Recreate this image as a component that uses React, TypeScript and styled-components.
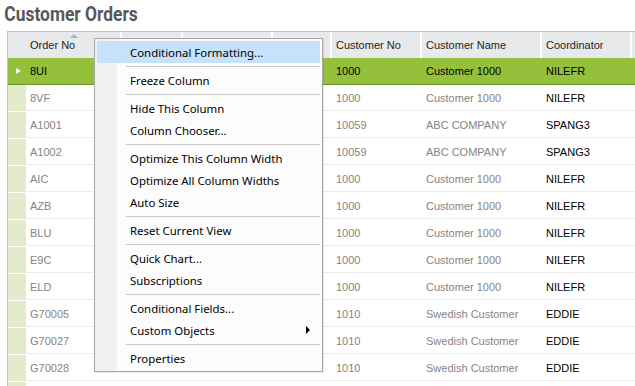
import React from "react";
import styled, { createGlobalStyle } from "styled-components";

const GlobalStyle = createGlobalStyle`
  html, body {
    margin: 0;
    padding: 0;
    background: #ffffff;
    overflow: hidden;
  }
`;

const Page = styled.div`
  position: relative;
  width: 635px;
  height: 386px;
  overflow: hidden;
  font-family: "Liberation Sans", Arial, sans-serif;
`;

const Title = styled.h1`
  margin: 0;
  padding: 3px 0 0 5px;
  height: 28px;
  box-sizing: border-box;
  font-family: Roboto, "Liberation Sans", sans-serif;
  font-weight: 700;
  font-size: 20px;
  line-height: 22px;
  color: #585858;
  transform: scaleX(0.87);
  transform-origin: left center;
  white-space: nowrap;
`;

const Grid = styled.div`
  margin: 3px 0 0 7px;
  border-left: 1px solid #c4c4c4;
  border-top: 1px solid #c4c4c4;
  width: 700px;
`;

const COLS = "18px 96px 61px 90px 59px 90px 120px 90px 80px";

const HeaderRow = styled.div`
  display: grid;
  grid-template-columns: 114px 61px 90px 59px 90px 120px 90px 80px;
  height: 26px;
  background: #e8e9eb;
`;

const HeadCell = styled.div<{ $pad?: number }>`
  position: relative;
  display: flex;
  align-items: center;
  padding-left: ${(p) => p.$pad ?? 4}px;
  padding-right: 2px;
  border-right: 2px solid #ffffff;
  font-size: 11px;
  color: #1e1e1e;
  white-space: nowrap;
  overflow: hidden;
  min-width: 0;
  & > span {
    overflow: hidden;
    text-overflow: ellipsis;
  }
`;

const SortMark = styled.div`
  position: absolute;
  top: 2px;
  left: 62px;
  width: 0;
  height: 0;
  border-left: 4px solid transparent;
  border-right: 4px solid transparent;
  border-bottom: 4px solid #a9b4bf;
`;

const Row = styled.div<{ $selected?: boolean }>`
  display: grid;
  grid-template-columns: ${COLS};
  height: 27px;
  box-sizing: border-box;
  font-size: 11px;
  background: ${(p) => (p.$selected ? "#94c03c" : "#ffffff")};
  border-bottom: 1px solid ${(p) => (p.$selected ? "#6d9428" : "transparent")};
`;

const Indicator = styled.div<{ $selected?: boolean }>`
  display: flex;
  align-items: center;
  justify-content: center;
  background: ${(p) => (p.$selected ? "#94c03c" : "#e2ebcc")};
`;

const Arrow = styled.div`
  width: 0;
  height: 0;
  border-top: 3.5px solid transparent;
  border-bottom: 3.5px solid transparent;
  border-left: 5px solid #ffffff;
  margin-left: 2px;
`;

const Cell = styled.div<{ $selected?: boolean; $dark?: boolean }>`
  display: flex;
  align-items: center;
  padding-left: 4px;
  white-space: nowrap;
  overflow: hidden;
  color: ${(p) => (p.$selected || p.$dark ? "#000000" : "#848484")};
  border-bottom: 1px solid ${(p) => (p.$selected ? "transparent" : "#ececec")};
`;

const Menu = styled.div`
  position: absolute;
  left: 94px;
  top: 38px;
  width: 229px;
  box-sizing: border-box;
  padding: 2px;
  border: 1px solid #a8a8a8;
  background: linear-gradient(to right, #f1f1f1 0, #f1f1f1 22px, #fcfcfc 22px);
  box-shadow: 1px 1px 1px rgba(0, 0, 0, 0.08);
  font-family: "Noto Sans", "Open Sans", sans-serif;
  font-size: 11.4px;
  color: #000000;
`;

const MenuItem = styled.div<{ $active?: boolean }>`
  position: relative;
  height: 22px;
  display: flex;
  align-items: center;
  padding-left: 33px;
  background: ${(p) => (p.$active ? "#c6e1fa" : "transparent")};
  white-space: nowrap;
`;

const SubArrow = styled.div`
  position: absolute;
  right: 10px;
  top: 7px;
  width: 0;
  height: 0;
  border-top: 4px solid transparent;
  border-bottom: 4px solid transparent;
  border-left: 4px solid #000000;
`;

const Separator = styled.div`
  height: 6px;
  display: flex;
  align-items: center;
  padding-left: 29px;
  &::after {
    content: "";
    flex: 1;
    height: 1px;
    background: #c9c9c9;
  }
`;

type Order = {
  id: string;
  type?: string;
  status?: string;
  flag?: string;
  cust: string;
  name: string;
  coord: string;
  selected?: boolean;
};

const c1000 = { cust: "1000", name: "Customer 1000", coord: "NILEFR" };
const abc = { cust: "10059", name: "ABC COMPANY", coord: "SPANG3" };
const swe = { cust: "1010", name: "Swedish Customer", coord: "EDDIE" };

const orders: Order[] = [
  { id: "8UI", ...c1000, selected: true },
  { id: "8VF", ...c1000 },
  { id: "A1001", ...abc },
  { id: "A1002", ...abc },
  { id: "AIC", ...c1000 },
  { id: "AZB", ...c1000 },
  { id: "BLU", ...c1000 },
  { id: "E9C", ...c1000 },
  { id: "ELD", ...c1000 },
  { id: "G70005", ...swe },
  { id: "G70027", ...swe },
  { id: "G70028", type: "P", status: "Planned", flag: "No", ...swe },
  { id: "G70029", type: "P", status: "Planned", flag: "No", ...swe },
];

type Entry = { label?: string; active?: boolean; sub?: boolean; sep?: boolean };

const menu: Entry[] = [
  { label: "Conditional Formatting...", active: true },
  { sep: true },
  { label: "Freeze Column" },
  { sep: true },
  { label: "Hide This Column" },
  { label: "Column Chooser..." },
  { sep: true },
  { label: "Optimize This Column Width" },
  { label: "Optimize All Column Widths" },
  { label: "Auto Size" },
  { sep: true },
  { label: "Reset Current View" },
  { sep: true },
  { label: "Quick Chart..." },
  { label: "Subscriptions" },
  { sep: true },
  { label: "Conditional Fields..." },
  { label: "Custom Objects", sub: true },
  { sep: true },
  { label: "Properties" },
];

export default function App() {
  return (
    <Page>
      <GlobalStyle />
      <Title>Customer Orders</Title>
      <Grid>
        <HeaderRow>
          <HeadCell $pad={22}>
            <SortMark />
            <span>Order No</span>
          </HeadCell>
          <HeadCell />
          <HeadCell />
          <HeadCell><span>Use Price Incl Tax</span></HeadCell>
          <HeadCell><span>Customer No</span></HeadCell>
          <HeadCell><span>Customer Name</span></HeadCell>
          <HeadCell><span>Coordinator</span></HeadCell>
          <HeadCell />
        </HeaderRow>
        {orders.map((o) => (
          <Row key={o.id} $selected={o.selected}>
            <Indicator $selected={o.selected}>{o.selected && <Arrow />}</Indicator>
            <Cell $selected={o.selected}>{o.id}</Cell>
            <Cell $selected={o.selected}>{o.type}</Cell>
            <Cell $selected={o.selected}>{o.status}</Cell>
            <Cell $selected={o.selected}>{o.flag}</Cell>
            <Cell $selected={o.selected}>{o.cust}</Cell>
            <Cell $selected={o.selected}>{o.name}</Cell>
            <Cell $selected={o.selected} $dark>{o.coord}</Cell>
            <Cell $selected={o.selected}></Cell>
          </Row>
        ))}
      </Grid>
      <Menu>
        {menu.map((m, i) =>
          m.sep ? (
            <Separator key={i} />
          ) : (
            <MenuItem key={i} $active={m.active}>
              {m.label}
              {m.sub && <SubArrow />}
            </MenuItem>
          )
        )}
      </Menu>
    </Page>
  );
}
